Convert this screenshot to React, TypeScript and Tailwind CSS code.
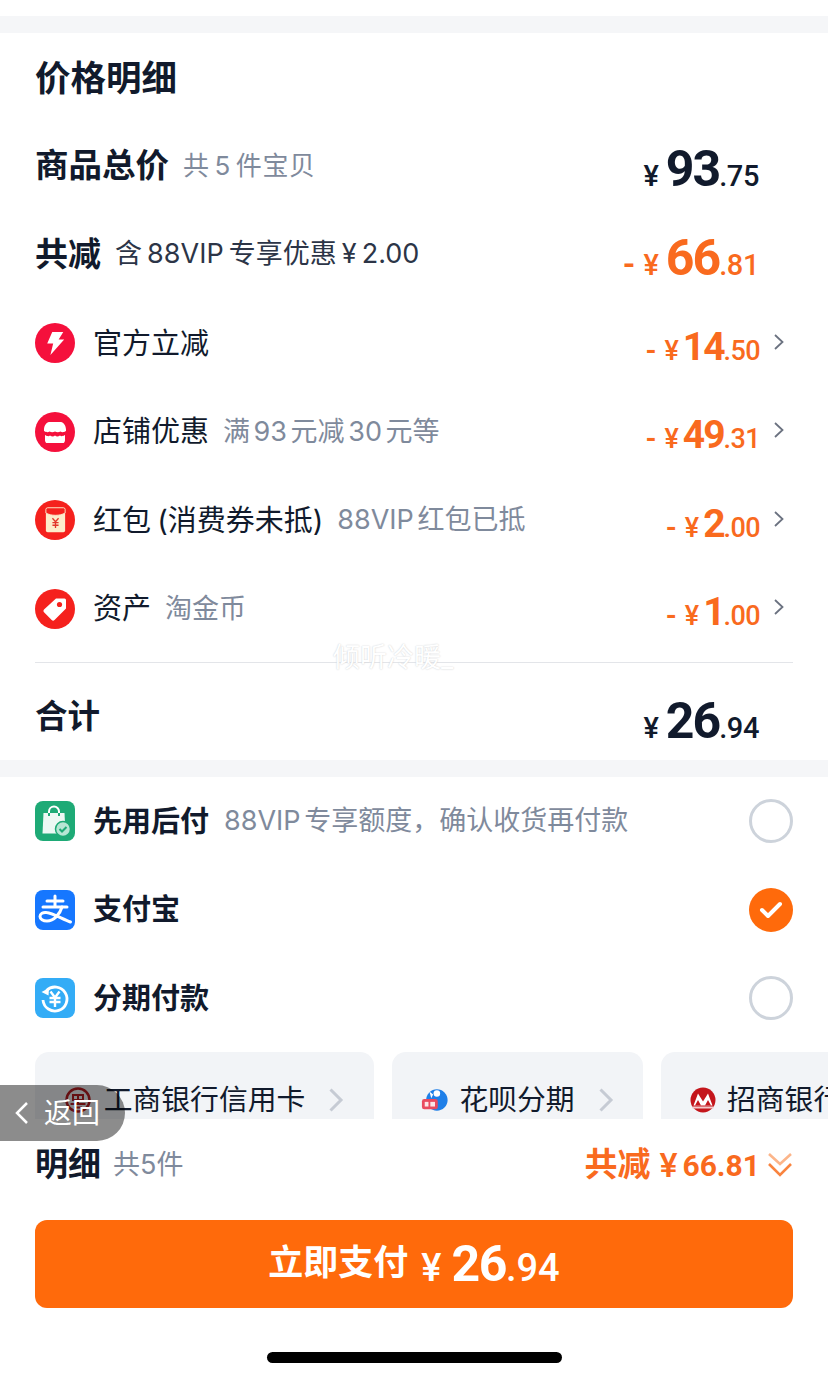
import React from "react";

const CJK = "font-['Inter','Noto_Sans_CJK_SC',sans-serif]";

function Chevron() {
  return (
    <svg width="12" height="18" viewBox="0 0 12 18" fill="none" className="ml-[13px] mb-[10px] shrink-0">
      <path d="M2 2l7.500 7L2 16" stroke="#6b7280" strokeWidth="1.800" />
    </svg>
  );
}

function Price({ int, dec, color, minus, big, chevron }: { int: string; dec: string; color: string; minus?: boolean; big?: boolean; chevron?: boolean }) {
  return (
    <div className={`flex items-baseline pt-[7px] ${color} font-['Roboto',sans-serif] font-bold`}>
      {minus && <span className={big ? "text-[32px] mr-[8px]" : "text-[28px] mr-[8px]"}>-</span>}
      <span className={big ? "text-[29px] mr-[7px] font-medium" : "text-[27px] mr-[4px] font-medium"}>¥</span>
      <span className={big ? "text-[50px] tracking-[-2px]" : "text-[39px] tracking-[-2px]"}>{int}</span>
      <span className={big ? "text-[29px] font-medium tracking-[-0.4px]" : "text-[27px] font-medium tracking-[-0.6px]"}>.{dec}</span>
      {chevron && <span className="flex items-center self-center"><Chevron /></span>}
    </div>
  );
}

function RedRound({ children, bg = "bg-[#f5103c]" }: { children: React.ReactNode; bg?: string }) {
  return <div className={`w-10 h-10 rounded-full ${bg} flex items-center justify-center shrink-0`}>{children}</div>;
}

const Bolt = () => (
  <RedRound>
    <svg width="22" height="27" viewBox="0 0 24 28">
      <path d="M9 1.500h12l-5 8h6L7 26.500l3-12.500H3.500z" fill="#fff" />
    </svg>
  </RedRound>
);
const Shop = () => (
  <RedRound>
    <svg width="22" height="22" viewBox="0 0 22 22">
      <path d="M5 1h12c2.500 0 5 4 5 7.500V10c-2.500 1.500-4 1.500-5.500.5-2 1-3.500 1-5.500 0-2 1-3.500 1-5.500 0C4 11.500 2.500 11.500 0 10V8.500C0 5 2.500 1 5 1z" fill="#fff" />
      <path d="M1 14c2.500 1.500 4 1.500 5 .5 2 1.200 3.500 1.200 5 0 1.500 1.200 3 1.200 5 0 1 1 2.500 1 5-.5v5c0 2.500-1.500 3.500-3 3.500H4c-1.500 0-3-1-3-3.500z" fill="#fff" />
    </svg>
  </RedRound>
);
const Envelope = () => (
  <RedRound bg="bg-[#f5211d]">
    <svg width="21" height="28" viewBox="0 0 24 30">
      <rect x="1" y="1" width="22" height="28" rx="2" fill="#fdeccb" />
      <path d="M1 3a2 2 0 0 1 2-2h18a2 2 0 0 1 2 2v4c-6 3.500-16 3.500-22 0z" fill="#f5211d" stroke="#fdeccb" strokeWidth="1" />
      <path d="M8.500 13l3.500 4 3.500-4M8.500 18h7M8.500 21h7M12 17v7" stroke="#e2352b" strokeWidth="1.500" fill="none" />
    </svg>
  </RedRound>
);
const Tag = () => (
  <RedRound bg="bg-[#f5211d]">
    <svg width="28" height="28" viewBox="0 0 28 28">
      <path d="M15 3.500h8.500a1.500 1.500 0 0 1 1.500 1.500v8.500L13.500 25a2 2 0 0 1-2.800 0L3 17.300a2 2 0 0 1 0-2.800z" fill="#fff" />
      <circle cx="18.500" cy="9.500" r="2.600" fill="#f5211d" />
    </svg>
  </RedRound>
);

function Row({ icon, title, note, price }: { icon: React.ReactNode; title: string; note?: string; price: React.ReactNode }) {
  return (
    <div className="h-[88.500px] flex items-center justify-between">
      <div className="flex items-center">
        {icon}
        <span className="ml-[18px] text-[29px] text-[#111a2c] whitespace-nowrap [word-spacing:-2px]">{title}</span>
        {note && <span className="ml-[14px] text-[27px] text-[#7f8a9c] whitespace-nowrap [word-spacing:-4px]">{note}</span>}
      </div>
      {price}
    </div>
  );
}

function Radio({ checked }: { checked?: boolean }) {
  if (checked)
    return (
      <div className="w-11 h-11 rounded-full bg-[#ff6a0b] flex items-center justify-center">
        <svg width="24" height="18" viewBox="0 0 24 18" fill="none">
          <path d="M3 9l6 6L21 3" stroke="#fff" strokeWidth="4" strokeLinecap="round" strokeLinejoin="round" />
        </svg>
      </div>
    );
  return <div className="w-11 h-11 rounded-full border-[3px] border-[#cdd3db]" />;
}

function PayRow({ icon, title, note, checked }: { icon: React.ReactNode; title: string; note?: string; checked?: boolean }) {
  return (
    <div className="h-[88.500px] flex items-center justify-between">
      <div className="flex items-center">
        {icon}
        <span className="ml-[18px] text-[29px] font-bold text-[#111a2c]">{title}</span>
        {note && <span className="ml-[15px] text-[27px] text-[#7f8a9c] whitespace-nowrap [word-spacing:-4px]">{note}</span>}
      </div>
      <Radio checked={checked} />
    </div>
  );
}

const Tile = ({ bg, children }: { bg: string; children: React.ReactNode }) => (
  <div className={`w-10 h-10 rounded-[8px] ${bg} flex items-center justify-center shrink-0`}>{children}</div>
);

const BagIcon = () => (
  <Tile bg="bg-[#1eaa76]">
    <svg width="34" height="34" viewBox="0 0 34 34" fill="none">
      <path d="M5.500 9h21l1 20.500h-23z" fill="#fff" opacity=".92" />
      <path d="M11 12V7.500a5 5 0 0 1 10 0V12" stroke="#1eaa76" strokeWidth="2" />
      <path d="M11 9V7.500a5 5 0 0 1 10 0V9" stroke="#fff" strokeWidth="2" />
      <circle cx="25" cy="25" r="7.500" fill="#b7e6d4" stroke="#1eaa76" strokeWidth="1.500" />
      <path d="M21.500 25l2.500 2.500 4.500-4.500" stroke="#1eaa76" strokeWidth="2" />
    </svg>
  </Tile>
);
const AlipayIcon = () => (
  <Tile bg="bg-[#1677ff]">
    <svg width="36" height="32" viewBox="0 0 36 32" fill="none" stroke="#fff" strokeWidth="3" strokeLinecap="round">
      <path d="M10 7h16M18 2v11M6 13h24" />
      <path d="M25 13c-2 7-8 14-15 14-4 0-7-2-7-4.500 0-3 3-4.500 6.500-4 6 .5 15 6 24 9.500" />
    </svg>
  </Tile>
);
const InstallIcon = () => (
  <Tile bg="bg-[#33acf6]">
    <svg width="32" height="32" viewBox="0 0 32 32" fill="none">
      <path d="M7.500 8.500A12 12 0 1 1 4 18" stroke="#fff" strokeWidth="2.800" />
      <path d="M2.500 10l7 3.500 .5-7.500z" fill="#fff" />
      <path d="M11.500 9.500l4.500 6 4.500-6M10.500 16h11M10.500 20h11M16 15.500V25" stroke="#fff" strokeWidth="2.400" />
    </svg>
  </Tile>
);

const IcbcIcon = () => (
  <svg width="26" height="26" viewBox="0 0 26 26" fill="none" className="shrink-0">
    <circle cx="13" cy="13" r="11.500" stroke="#b81c22" strokeWidth="2.500" />
    <path d="M8 8h10v5H8zM13 8v10M5.500 17h15M9 20.500h8" stroke="#b81c22" strokeWidth="2" />
  </svg>
);
const HuabeiIcon = () => (
  <svg width="28" height="26" viewBox="0 0 30 26" className="shrink-0">
    <circle cx="17" cy="13" r="11.500" fill="#1f7fe8" />
    <circle cx="17" cy="6" r="3.500" fill="#fff" />
    <path d="M9 4l4 3-2 4z" fill="#fff" />
    <rect x="1" y="12" width="17" height="11" rx="2.500" fill="#e94a5f" />
    <rect x="4" y="15" width="4" height="5" fill="#fff" opacity=".85" />
    <rect x="10" y="15" width="5" height="5" fill="#fff" opacity=".85" />
  </svg>
);
const CmbIcon = () => (
  <svg width="26" height="26" viewBox="0 0 26 26" className="shrink-0">
    <circle cx="13" cy="13" r="12.500" fill="#c4161c" />
    <path d="M3.500 18.500L8 6.500l5 8 5-8 4.500 12z" fill="#fff" />
    <path d="M8 13l3 5.500H5zM18 13l3 5.500h-6z" fill="#c4161c" />
    <rect x="2.500" y="19.500" width="21" height="2" fill="#f4c9cb" />
  </svg>
);

function SmallChev() {
  return (
    <svg width="16" height="26" viewBox="0 0 16 26" fill="none" className="shrink-0">
      <path d="M2.500 2.500L13 13 2.500 23.500" stroke="#c6cbd4" strokeWidth="3" />
    </svg>
  );
}

function Chip({ icon, label, cls, gap }: { icon: React.ReactNode; label: string; cls: string; gap: string }) {
  return (
    <div className={`h-[96px] rounded-[14px] bg-[#f2f4f7] flex items-center justify-center shrink-0 ${cls}`}>
      {icon}
      <span className={`${gap} text-[28.800px] text-[#111a2c] whitespace-nowrap`}>{label}</span>
      <span className="ml-[23px]"><SmallChev /></span>
    </div>
  );
}

export default function App() {
  return (
    <div className={`relative w-[828px] h-[1380px] overflow-hidden bg-white ${CJK}`}>
      <div className="h-4 bg-white" />
      <div className="h-[17px] bg-[#f5f6f8]" />

      <section className="h-[727px] px-[35px]">
        <h2 className="pt-[21px] h-[88px] text-[35.500px] leading-[50px] font-bold text-[#111a2c]">价格明细</h2>
        <div className="h-[89px] flex items-center justify-between pr-[34px]">
          <div className="flex items-center">
            <span className="text-[33.500px] font-bold text-[#111a2c]">商品总价</span>
            <span className="ml-[14px] text-[26px] text-[#7f8a9c] tracking-[0.6px] [word-spacing:-3px]">共 5 件宝贝</span>
          </div>
          <Price int="93" dec="75" color="text-[#111a2c]" big />
        </div>
        <div className="h-[89px] flex items-center justify-between pr-[34px]">
          <div className="flex items-center">
            <span className="text-[33px] font-bold text-[#111a2c]">共减</span>
            <span className="ml-[14px] text-[27px] text-[#2c3547] whitespace-nowrap [word-spacing:-2.500px]">含 88VIP 专享优惠 ¥ 2.00</span>
          </div>
          <Price int="66" dec="81" color="text-[#f96a1e]" minus big />
        </div>
        <div className="pr-[8px]">
          <Row icon={<Bolt />} title="官方立减" price={<Price int="14" dec="50" color="text-[#f96a1e]" minus chevron />} />
          <Row icon={<Shop />} title="店铺优惠" note="满 93 元减 30 元等" price={<Price int="49" dec="31" color="text-[#f96a1e]" minus chevron />} />
          <Row icon={<Envelope />} title="红包 (消费券未抵)" note="88VIP 红包已抵" price={<Price int="2" dec="00" color="text-[#f96a1e]" minus chevron />} />
          <Row icon={<Tag />} title="资产" note="淘金币" price={<Price int="1" dec="00" color="text-[#f96a1e]" minus chevron />} />
        </div>
        <div className="h-px bg-[#e3e5e9] mt-[9px]" />
        <div className="h-[97px] flex items-center justify-between pr-[34px] pt-[12px]">
          <span className="text-[32.500px] font-bold text-[#111a2c]">合计</span>
          <Price int="26" dec="94" color="text-[#111a2c]" big />
        </div>
      </section>

      <div className="h-[17px] bg-[#f5f6f8]" />

      <section className="h-[342px] overflow-hidden px-[35px]">
        <PayRow icon={<BagIcon />} title="先用后付" note="88VIP 专享额度，确认收货再付款" />
        <PayRow icon={<AlipayIcon />} title="支付宝" checked />
        <PayRow icon={<InstallIcon />} title="分期付款" />
        <div className="flex gap-[18px] w-[900px] mt-[9px]">
          <Chip icon={<IcbcIcon />} label="工商银行信用卡" cls="w-[339px]" gap="ml-[13px]" />
          <Chip icon={<HuabeiIcon />} label="花呗分期" cls="w-[251px]" gap="ml-[10px]" />
          <div className="h-[96px] w-[232px] rounded-[14px] bg-[#f2f4f7] flex items-center gap-[11px] pl-[29px] shrink-0 overflow-hidden">
            <CmbIcon />
            <span className="text-[28.800px] text-[#111a2c] whitespace-nowrap">招商银行</span>
          </div>
        </div>
      </section>

      <footer className="px-[35px]">
        <div className="h-[101px] pt-[6px] flex items-start justify-between">
          <div className="flex items-center h-[76px] pt-[4px]">
            <span className="text-[33px] font-bold text-[#111a2c]">明细</span>
            <span className="ml-3 text-[27px] text-[#7f8a9c]">共5件</span>
          </div>
          <div className="flex items-center h-[76px] pt-[4px] text-[#f96a1e]">
            <span className="text-[33px] font-bold">共减</span>
            <span className="ml-[9px] text-[34px] font-medium font-['Roboto',sans-serif]">¥</span>
            <span className="ml-[5px] text-[30px] font-bold font-['Roboto',sans-serif] whitespace-nowrap">66.81</span>
            <svg width="26" height="28" viewBox="0 0 26 28" fill="none" className="ml-[7px]">
              <path d="M2 3l11 10L24 3" stroke="#fcb58a" strokeWidth="2.600" />
              <path d="M2 13l11 11 11-11" stroke="#f9843f" strokeWidth="2.600" />
            </svg>
          </div>
        </div>
        <button className="w-full h-[88px] rounded-[12px] bg-[#ff6a0b] flex items-center justify-center text-white font-['Roboto','Noto_Sans_CJK_SC',sans-serif]">
          <span className="text-[35px] font-bold">立即支付</span>
          <span className="flex items-baseline leading-none ml-[13px]">
            <span className="text-[38px] font-medium">¥</span>
            <span className="ml-[10px] text-[50px] font-bold tracking-[-1.500px]">26</span>
            <span className="text-[38px] font-medium">.94</span>
          </span>
        </button>
        <div className="mx-auto mt-[44px] w-[295px] h-[11px] rounded-full bg-black" />
      </footer>

      <div className="absolute left-0 top-[1085px] w-[125px] h-[56px] rounded-r-[28px] bg-black/45 flex items-center text-white">
        <svg width="16" height="24" viewBox="0 0 16 24" fill="none" className="ml-[14px]">
          <path d="M13 2L3 12l10 10" stroke="#fff" strokeWidth="2.500" />
        </svg>
        <span className="ml-[14px] text-[28px]">返回</span>
      </div>

      <div className="absolute left-[333px] top-[638px] text-[27px] text-white whitespace-nowrap pointer-events-none [text-shadow:0_0_1.500px_#c4c6ca]">倾听冷暖_</div>
    </div>
  );
}
